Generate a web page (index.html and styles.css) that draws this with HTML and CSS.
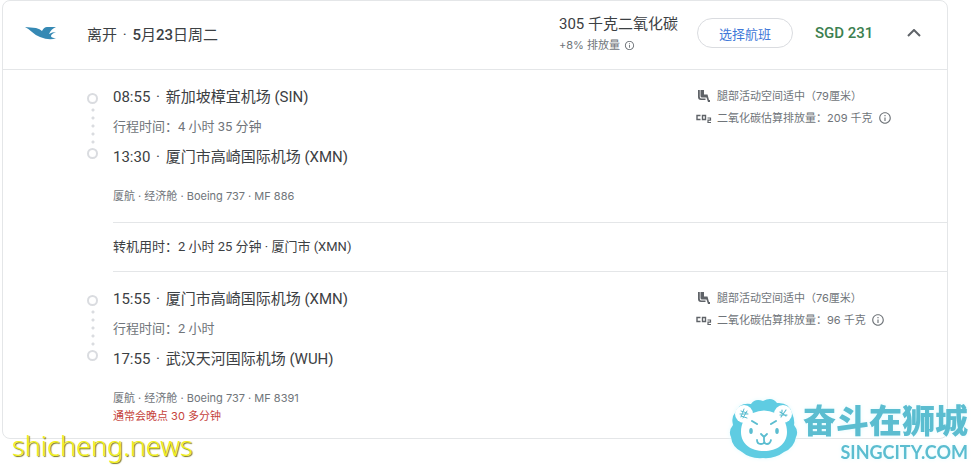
FILE: index.html
```html
<!DOCTYPE html>
<html lang="zh-CN">
<head>
    <meta charset="UTF-8">
    <meta name="viewport" content="width=device-width, initial-scale=1.0">
    <title>离开 · 5月23日周二</title>
    <link rel="stylesheet" href="styles.css">
</head>
<body>
    <!-- Shared icons -->
    <svg class="sprite" aria-hidden="true">
        <symbol id="icon-info" viewBox="0 0 24 24">
            <path d="M11 7h2v2h-2zm0 4h2v6h-2zm1-9C6.500 2 2 6.500 2 12s4.500 10 10 10 10-4.500 10-10S17.500 2 12 2zm0 18c-4.400 0-8-3.600-8-8s3.600-8 8-8 8 3.600 8 8-3.600 8-8 8z"/>
        </symbol>
        <symbol id="icon-seat" viewBox="0 0 12 12">
            <path d="M2.500 0H6v4.500h3.500L11 10h1v2h-2L8.500 7.500H4Q2.500 7.500 2.500 6z"/>
            <path d="M0 0h1.800v7Q2 8.500 3.500 8.500h4V10H3Q0 10 0 7z"/>
        </symbol>
        <symbol id="icon-co2" viewBox="0 0 16 12">
            <path d="M4.500 3.500H1v4h3.500M6.500 3.500h3v4h-3z" fill="none" stroke="currentColor" stroke-width="1.400"/>
            <path d="M11.500 6h3v2.200h-2.500v2.300h3" fill="none" stroke="currentColor" stroke-width="1.200"/>
        </symbol>
    </svg>

    <main class="card">
        <header class="summary">
            <svg class="airline" viewBox="0 0 32 14" role="img" aria-label="厦航">
                <path d="M0 1L11 2Q15 3 17 5Q19 1 22 1H31Q26 3 24 8Q27 6 31 6Q26 8 26 10Q26 12 31 12Q25 15 15 11Q10 9 7 6Q4 3 0 1Z" fill="#3689b4"/>
            </svg>
            <h1>离开 <span class="sep">·</span> <b>5</b>月<b>23</b>日周二</h1>
            <div class="emissions">
                <div class="total">305 千克二氧化碳</div>
                <div class="compare">+8% 排放量 <svg class="info small"><use href="#icon-info"/></svg></div>
            </div>
            <div class="actions">
                <button class="select" type="button">选择航班</button>
                <span class="price">SGD 231</span>
                <button class="collapse" type="button" aria-label="收起">
                    <svg viewBox="0 0 14 8"><path d="M1 7l6-6 6 6" fill="none" stroke="#5f6368" stroke-width="2"/></svg>
                </button>
            </div>
        </header>

        <section class="leg">
            <div class="rail"><i class="stop"></i><i class="dots"></i><i class="stop"></i></div>
            <div class="route">
                <div class="airport">08:55 <span class="sep">·</span> 新加坡樟宜机场 (SIN)</div>
                <div class="duration">行程时间：4 小时 35 分钟</div>
                <div class="airport">13:30 <span class="sep">·</span> 厦门市高崎国际机场 (XMN)</div>
                <div class="flight">厦航 · 经济舱 · Boeing 737 · MF 886</div>
            </div>
            <ul class="amenities">
                <li><svg class="seat"><use href="#icon-seat"/></svg>腿部活动空间适中（79厘米）</li>
                <li><svg class="co2"><use href="#icon-co2"/></svg>二氧化碳估算排放量：209 千克 <svg class="info"><use href="#icon-info"/></svg></li>
            </ul>
        </section>

        <div class="layover">转机用时：2 小时 25 分钟 · 厦门市 (XMN)</div>

        <section class="leg last">
            <div class="rail"><i class="stop"></i><i class="dots"></i><i class="stop"></i></div>
            <div class="route">
                <div class="airport">15:55 <span class="sep">·</span> 厦门市高崎国际机场 (XMN)</div>
                <div class="duration">行程时间：2 小时</div>
                <div class="airport">17:55 <span class="sep">·</span> 武汉天河国际机场 (WUH)</div>
                <div class="flight">厦航 · 经济舱 · Boeing 737 · MF 8391</div>
                <div class="delay">通常会晚点 30 多分钟</div>
            </div>
            <ul class="amenities">
                <li><svg class="seat"><use href="#icon-seat"/></svg>腿部活动空间适中（76厘米）</li>
                <li><svg class="co2"><use href="#icon-co2"/></svg>二氧化碳估算排放量：96 千克 <svg class="info"><use href="#icon-info"/></svg></li>
            </ul>
        </section>
    </main>

    <div class="site-mark">shicheng.news</div>

    <div class="brand">
        <svg class="lion" viewBox="0 0 70 62" aria-hidden="true">
            <path d="M22 6Q26 0 34 3Q43-2 48 5Q60 4 63 15Q66 22 65 27Q70 33 67 39Q65 50 55 54Q46 61 34 60Q21 61 13 54Q3 49 2 39Q-1 33 4 27Q2 19 6 15Q10 4 22 6Z" fill="#5fcce2"/>
            <g fill="#fff">
                <circle cx="15" cy="16" r="9"/>
                <circle cx="54" cy="16" r="9"/>
                <path d="M24 15Q35 10 46 15C55 19 58 26 58 34C58 46 48 53 35 53S12 46 12 34C12 26 15 19 24 15Z"/>
            </g>
            <g fill="none" stroke="#5bbdd0" stroke-linecap="round">
                <path d="M12 13l6 2M15 11l-3 8M12 18l6 2M18 13l-4 7M11 16h8" stroke-width="1"/>
                <path d="M51 14l6 4M57 12l-5 7M51 17h7M53 12v2" stroke-width="1.200"/>
                <path d="M23 23l5 3M47 23l-5 3" stroke-width="2"/>
                <path d="M32 36l3 3 3-3M35 39v3M28 42q0 4 4 4t3-4q0 4 3 4t4-4" stroke-width="1.800"/>
            </g>
            <ellipse cx="22" cy="33" rx="1.800" ry="3" fill="#5bbdd0"/>
            <ellipse cx="48" cy="33" rx="1.800" ry="3" fill="#5bbdd0"/>
        </svg>
        <div class="brand-text">
            <div class="brand-name">奋斗在狮城</div>
            <div class="brand-url">SINGCITY.COM</div>
        </div>
    </div>
</body>
</html>
```
FILE: styles.css
```css
* {
    box-sizing: border-box;
}
body {
    margin: 0;
    background-color: #fff;
    color: #3c4043;
    font-family: Roboto, "Noto Sans CJK SC", sans-serif;
    font-size: 15px;
}
svg {
    fill: currentColor;
    flex: none;
}
.sprite {
    position: absolute;
    width: 0;
    height: 0;
}
.card {
    margin: 0 26px 0 2px;
    border: 1px solid #e4e6e8;
    border-radius: 8px;
}
.summary {
    display: flex;
    align-items: center;
    height: 69px;
    padding-bottom: 4px;
    border-bottom: 1px solid #e4e6e8;
}
.airline {
    width: 32px;
    height: 14px;
    margin: 0 30px 0 22px;
}
h1 {
    flex: 1;
    margin: 0;
    font-size: 15px;
    font-weight: 400;
}
h1 b {
    font-weight: 500;
}
.sep {
    margin: 0 2px;
}
.emissions {
    width: 138px;
    white-space: nowrap;
}
.total {
    line-height: 24px;
}
.compare {
    display: flex;
    align-items: center;
    gap: 4px;
    color: #70757a;
    font-size: 11px;
    line-height: 18px;
}
.compare,
.flight,
.delay,
.amenities {
    font-family: Inter, "Noto Sans CJK SC", sans-serif;
}
.info {
    width: 14px;
    height: 14px;
}
.info.small {
    width: 11px;
    height: 11px;
}
.actions {
    display: flex;
    align-items: center;
    width: 250px;
}
.select {
    width: 96px;
    height: 30px;
    padding: 0;
    border: 1px solid #dadce0;
    border-radius: 15px;
    background-color: #fff;
    color: #3f78d8;
    font-family: inherit;
    font-size: 13px;
}
.price {
    flex: 1;
    margin-left: 22px;
    color: #3c8050;
    font-size: 15px;
    font-weight: 500;
}
.collapse {
    display: flex;
    align-items: center;
    justify-content: center;
    width: 32px;
    height: 32px;
    margin-right: 17px;
    padding: 0;
    border: 0;
    background: none;
}
.collapse svg {
    width: 14px;
    height: 8px;
}
.leg {
    display: flex;
    padding: 15px 0 18px 84px;
}
.leg.last {
    padding-bottom: 14px;
}
.rail {
    display: flex;
    flex-direction: column;
    align-items: center;
    width: 11px;
    margin-right: 15px;
    padding-top: 8px;
}
.stop {
    width: 11px;
    height: 11px;
    border: 2px solid #dadce0;
    border-radius: 50%;
}
.dots {
    width: 4px;
    height: 40px;
    margin: 2px 0;
    background: radial-gradient(circle, #dadce0 1px, transparent 2px) 0 0 / 4px 8px;
}
.route {
    flex: 1;
}
.airport {
    line-height: 24px;
}
.duration {
    margin: 8px 0;
    color: #70757a;
    font-size: 13px;
    line-height: 20px;
}
.flight {
    margin-top: 19px;
    color: #70757a;
    font-size: 11px;
    line-height: 16px;
}
.delay {
    margin-top: 2px;
    color: #c5423b;
    font-size: 11px;
    line-height: 16px;
}
.amenities {
    width: 251px;
    margin: 0;
    padding: 0;
    list-style: none;
    color: #70757a;
    font-size: 11px;
    line-height: 22px;
}
.amenities li {
    display: flex;
    align-items: center;
    gap: 5px;
}
.seat,
.co2 {
    width: 16px;
    height: 12px;
    color: #5f6368;
}
.layover {
    margin-left: 110px;
    border: solid #e4e6e8;
    border-width: 1px 0;
    font-size: 13px;
    line-height: 48px;
}

/* Site marks over the page corners */
.site-mark {
    position: absolute;
    left: 12px;
    bottom: 2px;
    color: #f3f01c;
    font-family: "Noto Sans", sans-serif;
    font-size: 27px;
    font-weight: 300;
    line-height: 36px;
    text-shadow: 1px 1px 1px #77751c;
}
.brand {
    position: absolute;
    right: 6px;
    bottom: 4px;
    display: flex;
    align-items: center;
    gap: 4px;
    color: #5bbdd0;
    filter: drop-shadow(0 0 2px #e2fbff);
}
.lion {
    width: 70px;
    height: 62px;
}
.brand-name {
    font-family: "Noto Sans CJK SC", sans-serif;
    font-size: 33px;
    font-weight: 900;
    line-height: 46px;
}
.brand-url {
    font-family: Lato, sans-serif;
    font-size: 18px;
    font-weight: 700;
    line-height: 20px;
    text-align: right;
}
```
